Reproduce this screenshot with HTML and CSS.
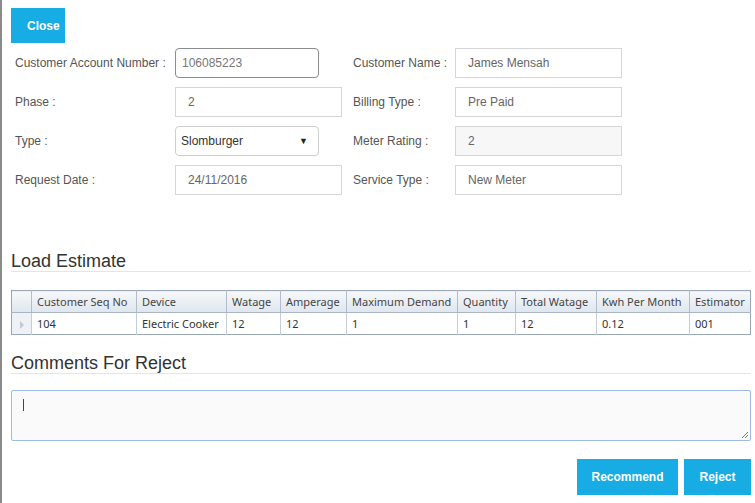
FILE: index.html
```html
<!DOCTYPE html>
<html>
<head>
<meta charset="utf-8">
<link rel="stylesheet" href="styles.css">
</head>
<body>
<div class="dialog">
  <div class="top"><button class="btn close-btn">Close</button></div>
  <div class="form">
    <label class="lbl">Customer Account Number :</label>
    <div class="field"><div class="input short rounded dark">106085223</div></div>
    <span></span>
    <label class="lbl">Customer Name :</label>
    <div class="field"><div class="input pad">James Mensah</div></div>

    <label class="lbl">Phase :</label>
    <div class="field"><div class="input pad">2</div></div>
    <span></span>
    <label class="lbl">Billing Type :</label>
    <div class="field"><div class="input pad">Pre Paid</div></div>

    <label class="lbl">Type :</label>
    <div class="field"><div class="input short rounded select"><span>Slomburger</span><span class="arrow">&#9660;</span></div></div>
    <span></span>
    <label class="lbl">Meter Rating :</label>
    <div class="field"><div class="input pad disabled">2</div></div>

    <label class="lbl">Request Date :</label>
    <div class="field"><div class="input pad">24/11/2016</div></div>
    <span></span>
    <label class="lbl">Service Type :</label>
    <div class="field"><div class="input pad">New Meter</div></div>
  </div>

  <h2 class="heading h-load">Load Estimate</h2>
  <table class="grid">
    <colgroup>
      <col style="width:20px"><col style="width:105px"><col style="width:90px"><col style="width:54px"><col style="width:66px"><col style="width:111px"><col style="width:58px"><col style="width:81px"><col style="width:93px"><col>
    </colgroup>
    <thead>
      <tr><th class="rh"></th><th>Customer Seq No</th><th>Device</th><th>Watage</th><th>Amperage</th><th>Maximum Demand</th><th>Quantity</th><th>Total Watage</th><th>Kwh Per Month</th><th>Estimator</th></tr>
    </thead>
    <tbody>
      <tr><td class="rh"><span class="tri"></span></td><td>104</td><td>Electric Cooker</td><td>12</td><td>12</td><td>1</td><td>1</td><td>12</td><td>0.12</td><td>001</td></tr>
    </tbody>
  </table>

  <h2 class="heading h-comments">Comments For Reject</h2>
  <div class="textarea"><span class="caret"></span>
    <svg class="grip" width="8" height="8" viewBox="0 0 8 8"><path d="M7 1L1 7M7 4L4 7" stroke="#777" stroke-width="1"/></svg>
  </div>
  <div class="actions">
    <button class="btn rec">Recommend</button>
    <button class="btn rej">Reject</button>
  </div>
</div>
</body>
</html>
```
FILE: styles.css
```css
html, body { margin: 0; padding: 0; background: #fff; }
body { font-family: "Liberation Sans", Arial, sans-serif; font-size: 12px; color: #444; }
.dialog {
  border-left: 2px solid #8a8a8a;
  height: 503px;
  box-sizing: border-box;
  padding: 8px 4px 0 9px;
}
.btn {
  background: #17ace3;
  color: #fff;
  border: none;
  font-family: "Liberation Sans", Arial, sans-serif;
  font-size: 12px;
  font-weight: bold;
  padding: 0;
  cursor: pointer;
}
.close-btn { width: 54px; height: 35px; display: block; padding-left: 16px; text-align: left; }
.form {
  display: grid;
  grid-template-columns: 160px 167px 11px 102px 167px;
  grid-auto-rows: 30px;
  row-gap: 9px;
  margin-top: 5px;
  padding-left: 4px;
  align-items: center;
}
.lbl { color: #555; font-size: 12px; }
.input {
  box-sizing: border-box;
  height: 30px;
  border: 1px solid #d6d6d6;
  display: flex;
  align-items: center;
  color: #666;
  font-size: 12px;
}
.input.pad { padding-left: 12px; height: 30px; }
.input.short { width: 144px; }
.rounded { border-radius: 4px; }
.dark { border-color: #8c8c8c; padding-left: 6px; color: #777; }
.select { border-color: #cfcfcf; padding: 0 10px 0 5px; justify-content: space-between; color: #333; }
.arrow { font-size: 9px; color: #222; }
.disabled { background: #f7f7f7; }
.heading {
  font-family: "Liberation Sans", Arial, sans-serif;
  font-weight: normal;
  font-size: 18px;
  line-height: 20px;
  color: #333;
  margin: 0;
  border-bottom: 1px solid #e5e5e5;
}
.h-load { margin-top: 56px; }
.h-comments { margin-top: 18px; }
.grid {
  margin-top: 18px;
  width: 740px;
  border-collapse: collapse;
  table-layout: fixed;
  font-family: "Noto Sans", "Open Sans", sans-serif;
  font-size: 11px;
  border: 1px solid #98a6b8;
}
.grid th {
  height: 21px;
  font-weight: normal;
  text-align: left;
  color: #444;
  padding: 0 0 0 5px;
  background: linear-gradient(#f6f8fa, #dfe6ef);
  border-left: 1px solid #b2bccb;
  border-bottom: 1px solid #a9b5c5;
  white-space: nowrap;
  overflow: hidden;
}
.grid td {
  height: 21px;
  padding: 0 0 0 5px;
  color: #333;
  border-left: 1px solid #c6cdd8;
  white-space: nowrap;
  overflow: hidden;
}
.grid th.rh, .grid td.rh { padding: 0; border-left: none; }
.grid td.rh { background: #eef1f5; text-align: center; }
.tri {
  display: inline-block;
  width: 0; height: 0;
  border-top: 4px solid transparent;
  border-bottom: 4px solid transparent;
  border-left: 4px solid #c3c9d2;
  vertical-align: middle;
}
.textarea {
  margin-top: 16px;
  width: 740px;
  height: 51px;
  box-sizing: border-box;
  border: 1px solid #9dbbe6;
  border-radius: 2px;
  background: #fafafa;
  position: relative;
}
.caret {
  position: absolute;
  left: 11px; top: 8px;
  width: 1px; height: 12px;
  background: #444;
}
.grip { position: absolute; right: 1px; bottom: 1px; }
.actions {
  display: flex;
  justify-content: flex-end;
  gap: 6px;
  margin-top: 18px;
  width: 740px;
}
.rec { width: 101px; height: 36px; }
.rej { width: 67px; height: 36px; }
```
